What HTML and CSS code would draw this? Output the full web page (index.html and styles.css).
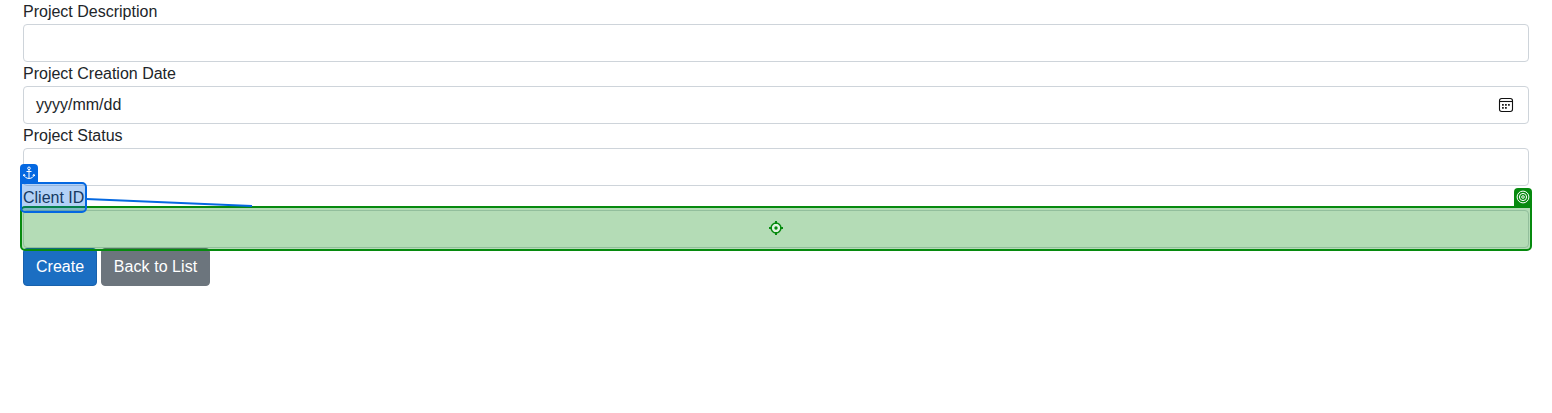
FILE: index.html
```html
<!DOCTYPE html>
<html lang="en">
<head>
<meta charset="utf-8">
<title>Create Project</title>
<link rel="stylesheet" href="styles.css">
</head>
<body>
<form class="form">
  <label class="label">Project Description</label>
  <div class="control"></div>
  <label class="label">Project Creation Date</label>
  <div class="control">
    <span>yyyy/mm/dd</span>
    <svg class="calendar" width="16" height="16" viewBox="0 0 16 16">
      <rect x="1.5" y="1.5" width="13" height="13" rx="2.2" fill="none" stroke="#111" stroke-width="1.1"/>
      <path d="M1.5 4.5h13" stroke="#111" stroke-width="1.1"/>
      <path d="M7 7h1.8v1.8H7zM10 7h1.8v1.8H10zM4 7h1.8v1.8H4zM4 10h1.8v1.8H4zM7 10h1.8v1.8H7z" fill="#222"/>
    </svg>
  </div>
  <label class="label">Project Status</label>
  <div class="control"></div>
  <label class="label">Client ID</label>
  <div class="control"></div>
  <div class="actions">
    <button type="button" class="btn btn-primary">Create</button>
    <button type="button" class="btn btn-secondary">Back to List</button>
  </div>
</form>

<div class="target">
  <span class="badge badge-target">
    <svg width="14" height="14" viewBox="0 0 14 14" fill="none" stroke="#fff" stroke-width="1">
      <circle cx="7" cy="7" r="5.9"/><circle cx="7" cy="7" r="3.6"/><circle cx="7" cy="7" r="1.3"/>
    </svg>
  </span>
  <svg class="crosshair" width="14" height="14" viewBox="0 0 14 14">
    <circle cx="7" cy="7" r="4.9" fill="#e0f2e0" stroke="#068a0e" stroke-width="1.5"/>
    <circle cx="7" cy="7" r="1.7" fill="#068a0e"/>
    <path d="M7 0v3M7 11v3M0 7h3M11 7h3" stroke="#068a0e" stroke-width="2"/>
  </svg>
</div>
<svg class="connector" width="170" height="12" viewBox="0 0 170 12">
  <path d="M0 3L166 10" stroke="#0468e1" stroke-width="2"/>
</svg>
<div class="anchor">
  <span class="badge badge-anchor">
    <svg width="14" height="14" viewBox="0 0 14 14" fill="none" stroke="#fff" stroke-width="1">
      <circle cx="7" cy="2.3" r="1.3"/>
      <path d="M7 3.6v8.7M4.5 5.5h5M1.9 8.8c.5 2.2 2.3 3.5 5.1 3.7 2.8-.2 4.6-1.5 5.1-3.7M1.3 10.1l.6-1.7 1.5 1M12.7 10.1l-.6-1.7-1.5 1"/>
    </svg>
  </span>
</div>
</body>
</html>
```
FILE: styles.css
```css
* { box-sizing: border-box; }
body {
  margin: 0;
  background: #fff;
  color: #212529;
  font: 16px/24px "Liberation Sans", Arial, sans-serif;
  overflow: hidden;
}
.form { padding: 0 23px; }
.label { display: block; height: 24px; }
.control {
  display: flex;
  align-items: center;
  justify-content: space-between;
  height: 38px;
  padding: 0 14px 0 12px;
  border: 1px solid #ced4da;
  border-radius: 4px;
}
.actions { display: flex; gap: 4px; }
.btn {
  height: 38px;
  padding: 6px 12px;
  border: 1px solid;
  border-radius: 4px;
  color: #fff;
  font: inherit;
}
.btn-primary { background: #1b6ec2; border-color: #1861ac; }
.btn-secondary {
  width: 109px;
  padding: 6px 11px;
  background: #6c757d;
  border-color: #6c757d;
  letter-spacing: .06px;
}

/* Inspector overlays */
.target {
  position: absolute;
  left: 20px;
  top: 206px;
  width: 1512px;
  height: 45px;
  border: 2px solid #068a0e;
  border-radius: 5px;
  border-top-right-radius: 0;
  background: rgba(6, 138, 14, .3);
}
.anchor {
  position: absolute;
  left: 20px;
  top: 182px;
  width: 67px;
  height: 31px;
  border: 2px solid #0468e1;
  border-radius: 5px;
  border-top-left-radius: 0;
  background: rgba(4, 104, 225, .3);
}
.badge {
  position: absolute;
  top: -20px;
  display: flex;
  align-items: center;
  justify-content: center;
  width: 18px;
  height: 18px;
  border-radius: 4px 4px 0 0;
}
.badge-anchor { left: -2px; background: #0468e1; }
.badge-target { right: -2px; background: #068a0e; }
.crosshair { position: absolute; left: 747px; top: 13px; }
.connector { position: absolute; left: 86px; top: 196px; }
```
